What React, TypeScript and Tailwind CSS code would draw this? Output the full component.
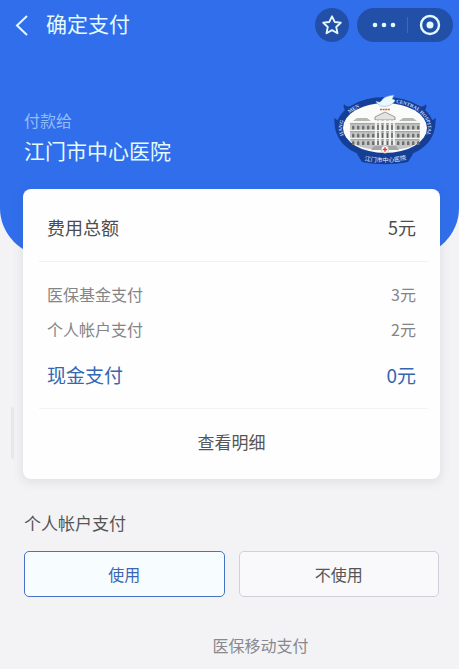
import React, { useState } from "react";

function HospitalEmblem() {
  const windows = [19, 24, 29, 34, 39, 64, 69, 74, 79, 84];
  return (
    <svg viewBox="0 0 104 72" className="h-[72px] w-[104px]" role="img" aria-label="江门市中心医院">
      <defs>
        <path id="arcLeft" d="M12 43.500 A43 26 0 0 1 43 8.600" />
        <path id="arcRight" d="M62 8.700 A43 26 0 0 1 92 43.500" />
        <path id="arcBottom" d="M29 66 Q52 71 76 65" />
      </defs>
      <g fill="#153f97">
        <ellipse cx="52" cy="34" rx="49" ry="31" />
        <path d="M1 24 C4 26 6 27 8 25 C9 22 11 19 13 17 C11 15 10 13 11 10 C13 13 17 13 21 12 L18 40 L4 40 C1 34 2 29 1 24Z" />
        <path d="M103 24 C100 26 98 27 96 25 C95 22 93 19 91 17 C93 15 94 13 93 10 C91 13 87 13 83 12 L86 40 L100 40 C103 34 102 29 103 24Z" />
        <path d="M24 60 H80 L75 68 C60 71 44 71 29 68Z" />
      </g>
      <ellipse cx="52" cy="34" rx="42" ry="25" fill="#fbfbf9" />
      <path d="M43 7 C46 9 48 8 49 6 C51 3 55 2 61 1 C60 3 60 4 59 5 C61 5 62 6 62 7 C58 12 53 13 48 12 C46 11 44 10 43 7Z" fill="#e9f8ff" stroke="#7fa4ce" strokeWidth=".5" />
      <path d="M17 28 H87 V47 C81 53 70 56 52 56 C35 56 24 53 17 47Z" fill="#c4c5c4" />
      <path d="M20 27 L24 24 H34 L38 27ZM66 27 L70 24 H80 L84 27Z" fill="#b6b7b7" />
      <path d="M42 26 V23 L52 18 L62 23 V26Z" fill="#e3e3e0" stroke="#74777a" strokeWidth=".7" />
      <path d="M16 28.500H88M16 36.500H88M17 44.500H87" stroke="#f4f4ef" strokeWidth="1.300" />
      <path d="M17 29.700H87M17 37.700H87M18 45.700H86" stroke="#85888a" strokeWidth=".7" />
      {windows.map((x) => (
        <path
          key={x}
          d={`M${x} 35.500v-3q1.200-2 2.400 0v3zM${x} 43.500v-3q1.200-2 2.400 0v3zM${x} 51v-3q1.200-2 2.400 0v3z`}
          fill="#6b6e72"
        />
      ))}
      <path d="M43 26V51M47 26V51M52 26V51M57 26V51M61 26V51" stroke="#fbfbf9" strokeWidth="1.600" />
      <path d="M45 31v5M45 39v5M49.500 31v5M49.500 39v5M54.500 31v5M54.500 39v5M59 31v5M59 39v5M45 47v4M49.500 47v4M54.500 47v4M59 47v4" stroke="#5f6368" strokeWidth="1.500" />
      <path d="M41 52H63L66 56H38Z" fill="#a3a5a6" />
      <circle cx="52" cy="55.500" r="3.800" fill="#fff" stroke="#999" strokeWidth=".5" />
      <path d="M52 53.200v4.600M49.700 55.500h4.600" stroke="#dc4235" strokeWidth="1.500" />
      <path d="M47 15.500h10" stroke="#d95b4e" strokeWidth="1.300" strokeDasharray="2 .6" />
      <g fill="#c9dcf8" fontFamily="Liberation Serif, serif" fontSize="5" fontWeight="700">
        <text><textPath href="#arcLeft" startOffset="2">JIANG</textPath></text>
        <text><textPath href="#arcLeft" startOffset="27">MEN</textPath></text>
        <text><textPath href="#arcRight" startOffset="1">CENTRAL HOSPITAL</textPath></text>
      </g>
      <text fill="#e7f2ff" fontFamily="Noto Sans CJK SC, sans-serif" fontSize="6">
        <textPath href="#arcBottom" startOffset="50%" textAnchor="middle">江门市中心医院</textPath>
      </text>
    </svg>
  );
}

type RowProps = { label: string; value: string; className: string };

function AmountRow({ label, value, className }: RowProps) {
  return (
    <div className={`flex items-center justify-between ${className}`}>
      <dt>{label}</dt>
      <dd>{value}</dd>
    </div>
  );
}

export default function App() {
  const [useAccount, setUseAccount] = useState(true);
  const chosen = "border-[#4774c2] bg-[#f7fcff] text-[#3b66b4]";
  const plain = "border-[#cfd1da] bg-[#f9f9fb] text-[#555]";

  return (
    <div className="min-h-screen bg-[#f3f3f5] font-['Noto_Sans_CJK_SC',sans-serif]">
      <header className="rounded-b-[48px] bg-[#306eeb] pb-[90px] text-[#e4faff]">
        <nav className="flex h-[50px] items-center pr-[6px] pl-[14px]">
          <button type="button" aria-label="返回" className="flex h-8 w-8 items-center">
            <svg viewBox="0 0 16 24" className="h-6 w-4" fill="none" stroke="currentColor" strokeWidth="2">
              <path d="M13 3 L3 12.500 L13 22" />
            </svg>
          </button>
          <h1 className="flex-1 pb-1 text-[21px] leading-8">确定支付</h1>
          <button type="button" aria-label="收藏" className="mr-2 flex h-[34px] w-[34px] items-center justify-center rounded-full bg-[#2250a8]">
            <svg viewBox="0 0 24 24" className="h-[22px] w-[22px]" fill="none" stroke="currentColor" strokeWidth="2" strokeLinejoin="round">
              <path d="M12 2.500 L14.900 8.700 L21.600 9.500 L16.600 14.200 L18 21 L12 17.600 L6 21 L7.400 14.200 L2.400 9.500 L9.100 8.700Z" />
            </svg>
          </button>
          <div className="flex h-[34px] w-24 items-center rounded-full bg-[#2250a8]">
            <button type="button" aria-label="更多" className="flex h-full flex-1 items-center justify-center pl-1">
              <svg viewBox="0 0 24 6" className="h-[6px] w-6" fill="currentColor">
                <circle cx="3" cy="3" r="2.300" />
                <circle cx="12" cy="3" r="2.300" />
                <circle cx="21" cy="3" r="2.300" />
              </svg>
            </button>
            <span className="h-4 w-px bg-[#3f69b8]" />
            <button type="button" aria-label="关闭" className="flex h-full flex-1 items-center justify-center">
              <svg viewBox="0 0 22 22" className="h-[22px] w-[22px]">
                <circle cx="11" cy="11" r="9" fill="none" stroke="currentColor" strokeWidth="2.400" />
                <circle cx="11" cy="11" r="3.500" fill="currentColor" />
              </svg>
            </button>
          </div>
        </nav>
        <div className="flex items-center justify-between pt-11 pr-[22px] pl-6">
          <div className="pt-3">
            <p className="text-[16px] leading-7 text-[#93bdf7]">付款给</p>
            <p className="text-[21px] leading-8">江门市中心医院</p>
          </div>
          <HospitalEmblem />
        </div>
      </header>

      <main className="-mt-[67px] pr-5 pl-6">
        <section className="relative -mx-px rounded-lg bg-[#fefefe] px-6 shadow-[0_2px_10px_2px_rgba(90,90,100,0.1)]">
          <span className="absolute bottom-5 -left-3 h-[52px] w-[3px] rounded-full bg-[#e7e7ea]" />
          <dl>
            <AmountRow label="费用总额" value="5元" className="h-[72px] pt-1 text-[18px] text-[#4d4d4d]" />
            <div className="-mr-3 -ml-2 border-t border-[#f1f1f1] pt-[14px]" />
            <AmountRow label="医保基金支付" value="3元" className="h-[35px] text-[16px] text-[#858585]" />
            <AmountRow label="个人帐户支付" value="2元" className="h-[35px] text-[16px] text-[#858585]" />
            <AmountRow label="现金支付" value="0元" className="mt-1 h-[50px] text-[19px] text-[#3266b2]" />
          </dl>
          <div className="-mr-3 -ml-2 mt-2 border-t border-[#f3f3f3] pr-1">
            <button type="button" className="h-[70px] w-full pb-1 text-[17px] text-[#555]">查看明细</button>
          </div>
        </section>

        <h2 className="mt-[30px] text-[17px] leading-7 text-[#555]">个人帐户支付</h2>
        <div className="mt-[14px] grid grid-cols-2 gap-[14px] text-[16px]">
          <button type="button" aria-pressed={useAccount} onClick={() => setUseAccount(true)} className={`h-[46px] rounded-[5px] border ${useAccount ? chosen : plain}`}>
            使用
          </button>
          <button type="button" aria-pressed={!useAccount} onClick={() => setUseAccount(false)} className={`h-[46px] rounded-[5px] border ${useAccount ? plain : chosen}`}>
            不使用
          </button>
        </div>
      </main>
      <footer className="pt-[34px] pl-[62px] text-center text-[16px] leading-7 text-[#88898d]">医保移动支付</footer>
    </div>
  );
}
